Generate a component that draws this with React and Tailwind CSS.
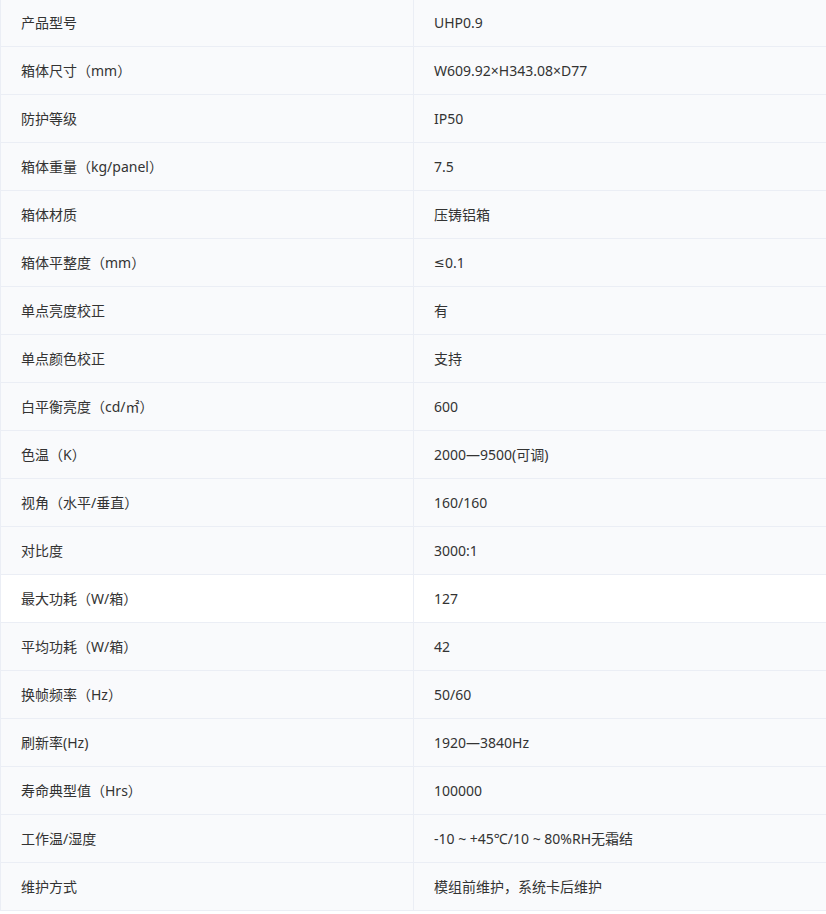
const rows = [
  ["产品型号", "UHP0.9"],
  ["箱体尺寸（mm）", "W609.92×H343.08×D77"],
  ["防护等级", "IP50"],
  ["箱体重量（kg/panel）", "7.5"],
  ["箱体材质", "压铸铝箱"],
  ["箱体平整度（mm）", <><span style={{ fontFamily: '"DejaVu Sans", sans-serif' }} className="text-[13px]">≤</span>0.1</>],
  ["单点亮度校正", "有"],
  ["单点颜色校正", "支持"],
  ["白平衡亮度（cd/㎡）", "600"],
  ["色温（K）", "2000—9500(可调)"],
  ["视角（水平/垂直）", "160/160"],
  ["对比度", "3000:1"],
  ["最大功耗（W/箱）", "127"],
  ["平均功耗（W/箱）", "42"],
  ["换帧频率（Hz）", "50/60"],
  ["刷新率(Hz)", "1920—3840Hz"],
  ["寿命典型值（Hrs）", "100000"],
  ["工作温/湿度", "-10 ~ +45℃/10 ~ 80%RH无霜结"],
  ["维护方式", "模组前维护，系统卡后维护"],
];

export default function App() {
  return (
    <div
      className="w-[840px] -mt-[2px] border-t border-l border-[#ebeef5] text-[14px] text-[#333]"
      style={{ fontFamily: '"Noto Sans", "Noto Sans CJK SC", sans-serif' }}
    >
      {rows.map(([k, v], i) => (
        <div
          key={i}
          className={`flex h-[48px] border-b border-[#ebeef5] ${i === 12 ? "bg-white" : "bg-[#f9fafc]"}`}
        >
          <div className="w-[413px] flex items-center pl-[20px] border-r border-[#ebeef5]">{k}</div>
          <div className="flex-1 flex items-center pl-[20px]">{v}</div>
        </div>
      ))}
    </div>
  );
}
